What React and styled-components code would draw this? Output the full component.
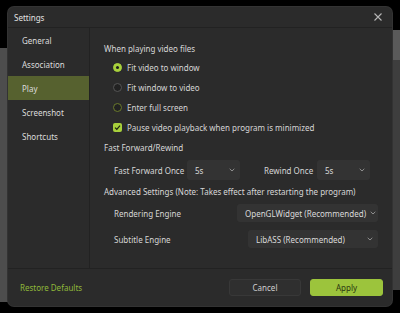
import React, { useState } from "react";
import styled, { createGlobalStyle } from "styled-components";

const GlobalStyle = createGlobalStyle`
  html, body {
    margin: 0;
    padding: 0;
    background: #000;
  }
  body {
    font-family: "Noto Sans", "Open Sans", sans-serif;
    font-size: 8px;
    color: #d6d6d6;
  }
`;

const navItems = ["General", "Association", "Play", "Screenshot", "Shortcuts"];
const radios = [
  { label: "Fit video to window", state: "on" },
  { label: "Fit window to video", state: "off" },
  { label: "Enter full screen", state: "hover" },
];

const App = () => {
  const [active, setActive] = useState("Play");

  return (
    <>
      <GlobalStyle />
      <Page>
        <Dialog>
          <TitleBar>
            <Title>Settings</Title>
            <CloseButton aria-label="close">
              <svg width="8" height="8" viewBox="0 0 8 8">
                <path d="M0.5 0.5 L7.5 7.5 M7.5 0.5 L0.5 7.5" stroke="#b5b5b5" strokeWidth="1.1" />
              </svg>
            </CloseButton>
          </TitleBar>
          <Body>
            <Sidebar>
              {navItems.map((item) => (
                <NavItem
                  key={item}
                  $active={item === active}
                  onClick={() => setActive(item)}
                >
                  {item}
                </NavItem>
              ))}
            </Sidebar>
            <Content>
              <SectionTitle>When playing video files</SectionTitle>
              {radios.map((r) => (
                <OptionRow key={r.label}>
                  <Radio $state={r.state} />
                  <span>{r.label}</span>
                </OptionRow>
              ))}
              <OptionRow>
                <Checkbox>
                  <svg width="7" height="7" viewBox="0 0 7 7">
                    <path d="M1 3.6 L2.8 5.3 L6 1.6" stroke="#1d2410" strokeWidth="1.2" fill="none" />
                  </svg>
                </Checkbox>
                <span>Pause video playback when program is minimized</span>
              </OptionRow>

              <SectionTitle $h={20}>Fast Forward/Rewind</SectionTitle>
              <ComboRow $h={26}>
                <Label $w={73}>Fast Forward Once</Label>
                <Combo $w={53}>
                  <ComboText>5s</ComboText>
                  <Chevron />
                </Combo>
                <Label $w={53} $ml={24}>Rewind Once</Label>
                <Combo $w={53}>
                  <ComboText>5s</ComboText>
                  <Chevron />
                </Combo>
              </ComboRow>

              <SectionTitle $h={16}>
                Advanced Settings (Note: Takes effect after restarting the program)
              </SectionTitle>
              <ComboRow $h={28}>
                <Label>Rendering Engine</Label>
                <Spacer />
                <Combo $w={141} $h={18}>
                  <ComboText>OpenGLWidget (Recommended)</ComboText>
                  <Chevron $tight />
                </Combo>
              </ComboRow>
              <ComboRow $h={24}>
                <Label>Subtitle Engine</Label>
                <Spacer />
                <Combo $w={130} $h={18}>
                  <ComboText>LibASS (Recommended)</ComboText>
                  <Chevron />
                </Combo>
              </ComboRow>
            </Content>
          </Body>
          <Footer>
            <LinkButton>Restore Defaults</LinkButton>
            <Spacer />
            <Button>Cancel</Button>
            <Button $primary>Apply</Button>
          </Footer>
        </Dialog>
      </Page>
    </>
  );
};

const Chevron = ({ $tight }) => (
  <ChevronBox $tight={$tight}>
    <svg width="6" height="4" viewBox="0 0 6 4">
      <path d="M0.7 0.8 L3 3 L5.3 0.8" stroke="#9a9a9a" strokeWidth="0.9" fill="none" />
    </svg>
  </ChevronBox>
);

const Page = styled.div`
  width: 400px;
  height: 313px;
  box-sizing: border-box;
  padding: 7px 8px 7px 8px;
  background:
    linear-gradient(to bottom, transparent 0 48px, #4d4d4d 48px 302px, transparent 302px) left top / 8px 100% no-repeat,
    linear-gradient(to bottom, transparent 0 30px, #5a5a5a 30px 60px, #3e3e3e 60px 290px, transparent 290px) right top / 8px 100% no-repeat,
    #000;
`;

const Dialog = styled.div`
  height: 100%;
  display: flex;
  flex-direction: column;
  background: #2b2b2b;
  border-radius: 6px;
  overflow: hidden;
  box-shadow: 0 0 0 1px #333;
`;

const TitleBar = styled.div`
  height: 20px;
  display: flex;
  align-items: center;
  padding: 0 6px 0 6px;
  border-bottom: 1px solid #222;
`;

const Title = styled.div`
  flex: 1;
  color: #e2e2e2;
`;

const CloseButton = styled.button`
  width: 16px;
  height: 16px;
  padding: 0;
  border: none;
  background: transparent;
  display: flex;
  align-items: center;
  justify-content: center;
`;

const Body = styled.div`
  flex: 1;
  display: flex;
  min-height: 0;
`;

const Sidebar = styled.div`
  width: 81px;
  border-right: 1px solid #222;
  display: flex;
  flex-direction: column;
`;

const NavItem = styled.div`
  height: 24px;
  display: flex;
  align-items: center;
  padding-left: 14px;
  color: #dcdcdc;
  background: ${(p) => (p.$active ? "#56612f" : "transparent")};
  cursor: pointer;
`;

const Content = styled.div`
  flex: 1;
  padding: 11px 14px 0 14px;
  display: flex;
  flex-direction: column;
  white-space: nowrap;
`;

const SectionTitle = styled.div`
  height: ${(p) => p.$h || 18}px;
  display: flex;
  align-items: center;
  color: #d8d8d8;
`;

const OptionRow = styled.div`
  height: 20px;
  display: flex;
  align-items: center;
  gap: 5px;
  padding-left: 9px;
`;

const Radio = styled.span`
  width: 9px;
  height: 9px;
  box-sizing: border-box;
  border-radius: 50%;
  position: relative;
  border: 1px solid
    ${(p) => (p.$state === "on" ? "#a8d03c" : p.$state === "hover" ? "#6a7a2c" : "#555")};
  background: ${(p) => (p.$state === "on" ? "#a8d03c" : "#222")};
  &::after {
    content: "";
    display: ${(p) => (p.$state === "on" ? "block" : "none")};
    position: absolute;
    left: 2px;
    top: 2px;
    width: 3px;
    height: 3px;
    border-radius: 50%;
    background: #1e1e1e;
  }
`;

const Checkbox = styled.span`
  width: 9px;
  height: 9px;
  border-radius: 2px;
  background: #a8d03c;
  display: flex;
  align-items: center;
  justify-content: center;
`;

const ComboRow = styled.div`
  height: ${(p) => p.$h}px;
  display: flex;
  align-items: center;
  padding-left: 10px;
`;

const Label = styled.span`
  width: ${(p) => (p.$w ? `${p.$w}px` : "auto")};
  flex-shrink: 0;
  margin-left: ${(p) => p.$ml || 0}px;
  color: #d6d6d6;
`;

const Spacer = styled.div`
  flex: 1;
`;

const Combo = styled.div`
  width: ${(p) => p.$w}px;
  height: ${(p) => p.$h || 20}px;
  flex-shrink: 0;
  box-sizing: border-box;
  background: #333;
  border-radius: 3px;
  display: flex;
  align-items: center;
  padding-left: 8px;
  color: #dadada;
`;

const ComboText = styled.span`
  flex: 1;
  white-space: nowrap;
  overflow: hidden;
`;

const ChevronBox = styled.span`
  width: ${(p) => (p.$tight ? 8 : 16)}px;
  flex-shrink: 0;
  display: flex;
  align-items: center;
  justify-content: ${(p) => (p.$tight ? "flex-start" : "center")};
`;

const Footer = styled.div`
  height: 37px;
  border-top: 1px solid #222;
  display: flex;
  align-items: center;
  padding: 0 9px 0 12px;
  gap: 9px;
`;

const LinkButton = styled.span`
  color: #8fb83a;
`;

const Button = styled.button`
  width: ${(p) => (p.$primary ? 73 : 72)}px;
  height: 17px;
  border-radius: 3px;
  font-family: inherit;
  font-size: 8px;
  border: 1px solid ${(p) => (p.$primary ? "#9cc43c" : "#383838")};
  background: ${(p) => (p.$primary ? "#9cc43c" : "#2f2f2f")};
  color: ${(p) => (p.$primary ? "#2a3510" : "#d0d0d0")};
  padding: 0;
`;

export default App;
